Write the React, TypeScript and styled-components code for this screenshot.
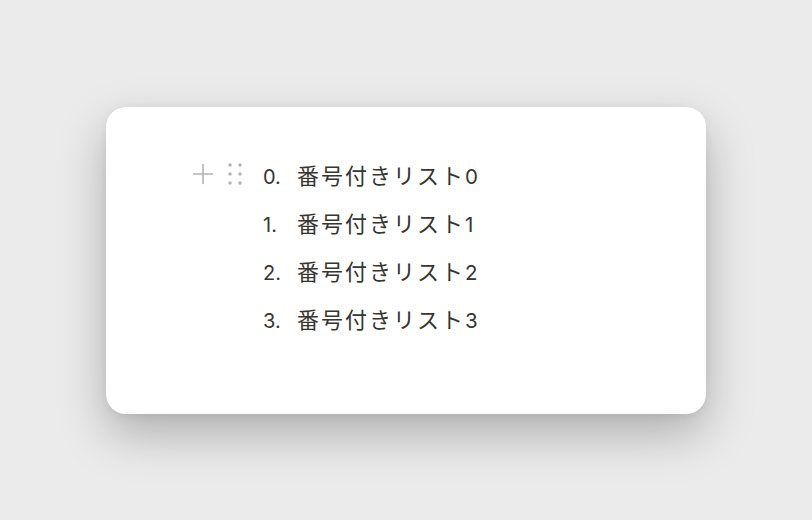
import React from 'react';
import styled, { createGlobalStyle } from 'styled-components';

const GlobalStyle = createGlobalStyle`
  html, body {
    margin: 0;
    padding: 0;
    background: #ebebeb;
  }
  body {
    font-family: Inter, "Noto Sans CJK JP", sans-serif;
  }
`;

const Page = styled.div`
  min-height: 100vh;
  display: flex;
  align-items: center;
  justify-content: center;
`;

const Card = styled.div`
  width: 600px;
  height: 307px;
  box-sizing: border-box;
  background: #ffffff;
  border-radius: 20px;
  box-shadow: 0 20px 48px rgba(0, 0, 0, 0.26), 0 2px 8px rgba(0, 0, 0, 0.06);
  padding: 43px 0 0 157px;
`;

const List = styled.ol`
  list-style: none;
  margin: 0;
  padding: 0;
  display: flex;
  flex-direction: column;
`;

const Row = styled.li`
  position: relative;
  height: 48px;
  line-height: 48px;
  display: flex;
  align-items: baseline;
  color: #37352f;
  font-size: 20px;
`;

const Marker = styled.span`
  width: 34px;
  flex: none;
  font-family: Inter, sans-serif;
`;

const Label = styled.span`
  font-family: "Noto Sans CJK JP", sans-serif;
  font-size: 22px;
  font-weight: 400;
  letter-spacing: 2px;
`;

const Num = styled.span`
  font-family: Inter, sans-serif;
  font-size: 20.5px;
  letter-spacing: 0;
`;

const Handles = styled.div`
  position: absolute;
  left: -71px;
  top: 50%;
  transform: translateY(-50%);
  display: flex;
  align-items: center;
  gap: 14px;
  line-height: 0;
  color: #b3b3b1;
`;

const PlusIcon = () => (
  <svg width="22" height="22" viewBox="0 0 22 22" fill="none">
    <path d="M11 1.5V20.5M1.5 11H20.5" stroke="currentColor" strokeWidth="1.6" strokeLinecap="round" />
  </svg>
);

const DragIcon = () => (
  <svg width="14" height="22" viewBox="0 0 14 22" fill="currentColor">
    {[2, 11, 20].map((y) => (
      <React.Fragment key={y}>
        <circle cx="2" cy={y} r="1.7" />
        <circle cx="12" cy={y} r="1.7" />
      </React.Fragment>
    ))}
  </svg>
);

const items = [0, 1, 2, 3];

export default function App() {
  return (
    <>
      <GlobalStyle />
      <Page>
        <Card>
          <List>
            {items.map((n) => (
              <Row key={n}>
                {n === 0 && (
                  <Handles>
                    <PlusIcon />
                    <DragIcon />
                  </Handles>
                )}
                <Marker>{n}.</Marker>
                <Label>
                  番号付きリスト<Num>{n}</Num>
                </Label>
              </Row>
            ))}
          </List>
        </Card>
      </Page>
    </>
  );
}
